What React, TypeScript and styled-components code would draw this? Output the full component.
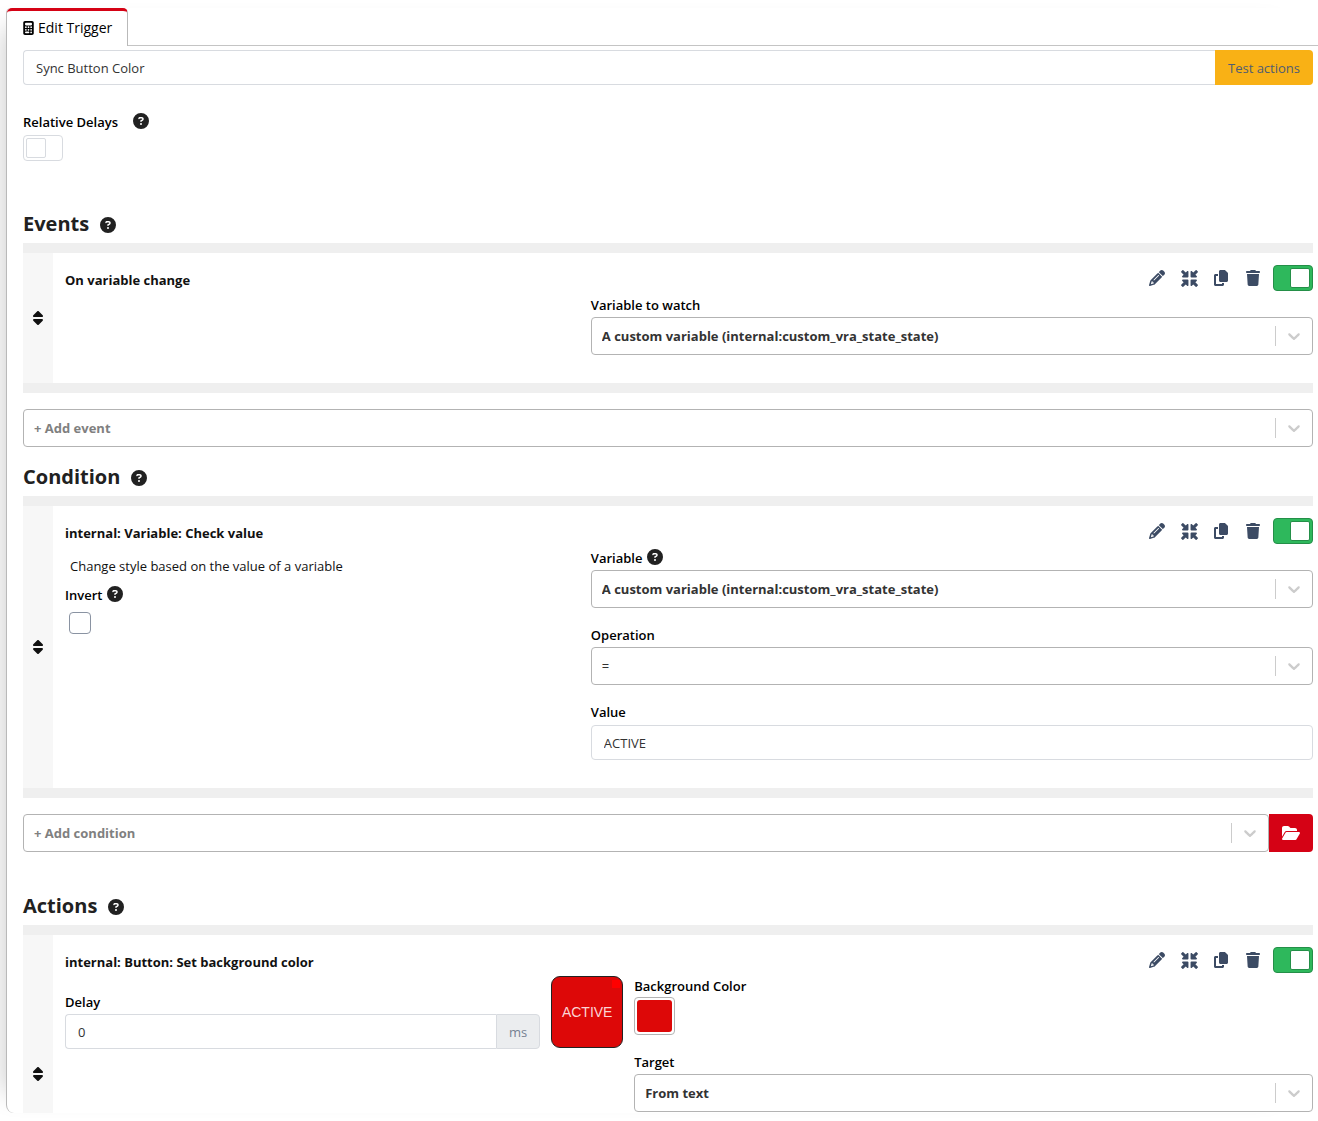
import React, { useId, useState } from 'react';
import styled, { createGlobalStyle, css } from 'styled-components';
import {
  FaCalculator,
  FaCircleQuestion,
  FaCopy,
  FaFolderOpen,
  FaMinimize,
  FaPencil,
  FaSort,
  FaTrash,
} from 'react-icons/fa6';

const GlobalStyle = createGlobalStyle`
  *, *::before, *::after { box-sizing: border-box; }
  body {
    margin: 0;
    background: #fff;
    color: #212121;
    font-family: "Open Sans", "Noto Sans", sans-serif;
    font-size: 13px;
    line-height: 20px;
  }
  button, input, select { font: inherit; }
  h2, h3, p { margin: 0; }
`;

const Page = styled.div`
  height: 100vh;
  padding: 8px 0 8px 6px;
  overflow: hidden;
`;

const Panel = styled.main`
  display: flex;
  flex-direction: column;
  height: 100%;
  border-left: 1px solid #b9b9b9;
  border-radius: 5px 0 0 8px;
  background: #fff;
  box-shadow: -22px 0 24px -20px rgba(0, 0, 0, 0.2);
`;

const TabBar = styled.nav`
  display: flex;
  flex: none;
  height: 38px;
`;

const Tab = styled.button`
  display: flex;
  align-items: center;
  gap: 4px;
  width: 121px;
  padding: 0 0 2px 16px;
  border: 0;
  border-top: 3px solid #d50215;
  border-right: 1px solid #b9b9b9;
  border-radius: 5px 5px 0 0;
  background: #fff;
  color: #000;
  font-size: 14px;
  font-weight: 500;
  white-space: nowrap;

  svg {
    flex: none;
    width: 11px;
    height: 14px;
  }
`;

const TabRest = styled.div`
  flex: 1;
  border-bottom: 1px solid #c4c4c4;
`;

const Content = styled.div`
  flex: 1;
  min-height: 0;
  padding: 4px 5px 0 16px;
  overflow: hidden;
`;

const InputGroup = styled.div`
  display: flex;
`;

const TextInput = styled.input<{ $joined?: boolean }>`
  flex: 1;
  width: 100%;
  min-width: 0;
  height: 35px;
  padding: 0 12px;
  border: 1px solid #d8dbe0;
  border-right-width: ${(p) => (p.$joined ? 0 : 1)}px;
  border-radius: ${(p) => (p.$joined ? '4px 0 0 4px' : '4px')};
  background: #fff;
  color: #333;
  outline: 0;
`;

const Unit = styled.span`
  display: flex;
  align-items: center;
  padding: 0 12px;
  border: 1px solid #d8dbe0;
  border-radius: 0 4px 4px 0;
  background: #ebedef;
  color: #768192;
`;

const TestButton = styled.button`
  width: 98px;
  border: 0;
  border-radius: 0 4px 4px 0;
  background: #f9b115;
  color: #4f5d73;
`;

const BrowseButton = styled.button`
  display: grid;
  place-items: center;
  width: 44px;
  border: 0;
  border-radius: 0 4px 4px 0;
  background: #d50215;
  color: #fff;
`;

const Label = styled.label`
  color: #000;
  font-weight: 600;
`;

const LabelLine = styled.div<{ $gap?: number }>`
  display: flex;
  align-items: center;
  gap: ${(p) => p.$gap ?? 5}px;
  height: 20px;

  svg { margin-bottom: 2px; }
`;

const DelaySetting = styled.div`
  display: grid;
  gap: 3px;
  margin: 27px 0 50px;
`;

const Switch = styled.input`
  appearance: none;
  display: block;
  width: 40px;
  height: 26px;
  margin: 0;
  padding: 2px;
  border: 1px solid #d8dbe0;
  border-radius: 4px;
  background: #fff;

  &::before {
    content: '';
    display: block;
    width: 20px;
    height: 20px;
    border: 1px solid #d8dbe0;
    border-radius: 2px;
    background: #fff;
  }

  &:checked {
    border-color: #248f48;
    background: #2eb85c;
  }

  &:checked::before {
    margin-left: auto;
    border-color: #248f48;
  }
`;

const Heading = styled.div<{ $top?: number }>`
  display: flex;
  align-items: center;
  gap: 11px;
  height: 26px;
  margin: ${(p) => p.$top ?? 0}px 0 6px;

  svg { margin-top: 2px; }
`;

const HeadingText = styled.h2`
  color: #212121;
  font-size: 20px;
  font-weight: 700;
  line-height: 26px;
`;

const Entry = styled.section<{ $minHeight?: number }>`
  display: flex;
  min-height: ${(p) => p.$minHeight ?? 0}px;
  border: solid #efefef;
  border-width: 10px 0;
`;

const Handle = styled.div`
  display: grid;
  flex: none;
  place-items: center;
  width: 30px;
  background: #f7f7f7;
  color: #111;
`;

const EntryMain = styled.div`
  flex: 1;
  min-width: 0;
  padding: 12px 0 28px 12px;
`;

const EntryHead = styled.div<{ $height?: number }>`
  display: flex;
  align-items: flex-start;
  justify-content: space-between;
  height: ${(p) => p.$height ?? 30}px;
`;

const EntryTitle = styled.h3`
  align-self: center;
  color: #111;
  font-size: 13px;
  font-weight: 700;
`;

const Tools = styled.div`
  display: flex;
  align-items: center;
  gap: 6px;
`;

const IconButtons = styled.div`
  display: flex;
  gap: 4px;
`;

const IconButton = styled.button`
  display: grid;
  place-items: center;
  width: 28px;
  height: 26px;
  padding: 0;
  border: 0;
  background: none;
  color: #3c4b64;
`;

const Columns = styled.div<{ $preview?: boolean }>`
  display: grid;
  ${(p) =>
    p.$preview
      ? css`
          grid-template-columns: 7fr 72px 10fr;
          gap: 11px;
        `
      : css`
          grid-template-columns: 5fr 7fr;
          gap: 10px;
        `}
`;

const Stack = styled.div<{ $top?: number }>`
  display: flex;
  flex-direction: column;
  gap: 17px;
  min-width: 0;
  padding-top: ${(p) => p.$top ?? 0}px;
`;

const Field = styled.div<{ $gap?: number }>`
  display: grid;
  gap: ${(p) => p.$gap ?? 2}px;
`;

const Summary = styled.div`
  display: grid;
  align-content: start;
  gap: 9px;
  padding-top: 8px;
`;

const Description = styled.p`
  padding-left: 5px;
  color: #111;
`;

const Tick = styled.input`
  appearance: none;
  width: 22px;
  height: 22px;
  margin: 0 0 0 4px;
  border: 1px solid #8a93a2;
  border-radius: 4px;
  background: #fff;
`;

const SelectBox = styled.div`
  display: grid;
  flex: 1;
  height: 38px;
  border: 1px solid #b3b3b3;
  border-radius: 4px;
  background: #fff;

  > * { grid-area: 1 / 1; }
`;

const NativeSelect = styled.select<{ $muted?: boolean; $plain?: boolean }>`
  appearance: none;
  width: 100%;
  padding: 0 48px 0 10px;
  border: 0;
  border-radius: 4px;
  background: transparent;
  color: ${(p) => (p.$muted ? '#808080' : '#333')};
  font-weight: ${(p) => (p.$plain ? 400 : 700)};
  outline: 0;
`;

const Indicator = styled.span`
  display: grid;
  place-items: center;
  align-self: center;
  justify-self: end;
  width: 37px;
  height: 20px;
  border-left: 1px solid #ccc;
  color: #ccc;
  pointer-events: none;
`;

const Preview = styled.div`
  display: grid;
  place-items: center;
  position: relative;
  width: 72px;
  height: 72px;
  border: 1px solid #222;
  border-radius: 9px;
  background: #dd0808;
  color: #fbd5d5;
  font-family: "Liberation Sans", Arial, sans-serif;
  font-size: 14px;

  &::after {
    content: '';
    position: absolute;
    top: 3px;
    right: 2px;
    width: 8px;
    height: 8px;
    background: #f00;
  }
`;

const ColorWell = styled.input`
  appearance: none;
  width: 41px;
  height: 38px;
  padding: 2px;
  border: 1px solid #b3b3b3;
  border-radius: 4px;
  background: #fff;

  &::-webkit-color-swatch-wrapper { padding: 0; }
  &::-webkit-color-swatch { border: 0; border-radius: 3px; }
`;

function Help() {
  return <FaCircleQuestion size={16} role="img" aria-label="Help" />;
}

type SelectProps = {
  id?: string;
  label?: string;
  value: string;
  muted?: boolean;
  plain?: boolean;
};

function Select({ id, label, value, muted, plain }: SelectProps) {
  return (
    <SelectBox>
      <NativeSelect id={id} aria-label={label} $muted={muted} $plain={plain}>
        <option>{value}</option>
      </NativeSelect>
      <Indicator>
        <svg width="20" height="20" viewBox="0 0 20 20" fill="currentColor" aria-hidden="true">
          <path d="M4.516 7.548c0.436-0.446 1.043-0.481 1.576 0l3.908 3.747 3.908-3.747c0.533-0.481 1.141-0.446 1.574 0 0.436 0.445 0.408 1.197 0 1.615-0.406 0.418-4.695 4.502-4.695 4.502-0.217 0.223-0.502 0.335-0.787 0.335s-0.57-0.112-0.789-0.335c0 0-4.287-4.084-4.695-4.502s-0.436-1.17 0-1.615z" />
        </svg>
      </Indicator>
    </SelectBox>
  );
}

type SelectFieldProps = { label: string; value: string; help?: boolean; plain?: boolean };

function SelectField({ label, value, help, plain }: SelectFieldProps) {
  const id = useId();
  return (
    <Field>
      <LabelLine>
        <Label htmlFor={id}>{label}</Label>
        {help && <Help />}
      </LabelLine>
      <Select id={id} value={value} plain={plain} />
    </Field>
  );
}

type EntryRowProps = {
  title: string;
  headHeight?: number;
  minHeight?: number;
  children: React.ReactNode;
};

function EntryRow({ title, headHeight, minHeight, children }: EntryRowProps) {
  const [enabled, setEnabled] = useState(true);
  return (
    <Entry $minHeight={minHeight}>
      <Handle>
        <FaSort size={16} />
      </Handle>
      <EntryMain>
        <EntryHead $height={headHeight}>
          <EntryTitle>{title}</EntryTitle>
          <Tools>
            <IconButtons>
              <IconButton aria-label="Rename"><FaPencil size={16} /></IconButton>
              <IconButton aria-label="Collapse"><FaMinimize size={17} /></IconButton>
              <IconButton aria-label="Duplicate"><FaCopy size={16} /></IconButton>
              <IconButton aria-label="Delete"><FaTrash size={16} /></IconButton>
            </IconButtons>
            <Switch
              type="checkbox"
              aria-label="Enabled"
              checked={enabled}
              onChange={(e) => setEnabled(e.target.checked)}
            />
          </Tools>
        </EntryHead>
        {children}
      </EntryMain>
    </Entry>
  );
}

function SectionHeading({ text, top }: { text: string; top?: number }) {
  return (
    <Heading $top={top}>
      <HeadingText>{text}</HeadingText>
      <Help />
    </Heading>
  );
}

const AddRow = styled.div`
  display: flex;
  margin-top: 16px;
`;

export default function App() {
  const variable = 'A custom variable (internal:custom_vra_state_state)';
  return (
    <>
      <GlobalStyle />
      <Page>
        <Panel>
          <TabBar>
            <Tab>
              <FaCalculator />
              Edit Trigger
            </Tab>
            <TabRest />
          </TabBar>
          <Content>
            <InputGroup>
              <TextInput $joined aria-label="Trigger name" defaultValue="Sync Button Color" />
              <TestButton>Test actions</TestButton>
            </InputGroup>

            <DelaySetting>
              <LabelLine $gap={15}>
                <Label htmlFor="relative-delays">Relative Delays</Label>
                <Help />
              </LabelLine>
              <Switch type="checkbox" id="relative-delays" />
            </DelaySetting>

            <SectionHeading text="Events" />
            <EntryRow title="On variable change">
              <Columns>
                <div />
                <SelectField label="Variable to watch" value={variable} />
              </Columns>
            </EntryRow>
            <AddRow>
              <Select label="Add event" value="+ Add event" muted />
            </AddRow>

            <SectionHeading text="Condition" top={17} />
            <EntryRow title="internal: Variable: Check value">
              <Columns>
                <Summary>
                  <Description>Change style based on the value of a variable</Description>
                  <Field $gap={7}>
                    <LabelLine>
                      <Label htmlFor="invert">Invert</Label>
                      <Help />
                    </LabelLine>
                    <Tick type="checkbox" id="invert" />
                  </Field>
                </Summary>
                <Stack>
                  <SelectField label="Variable" value={variable} help />
                  <SelectField label="Operation" value="=" plain />
                  <Field $gap={3}>
                    <Label htmlFor="value">Value</Label>
                    <TextInput id="value" defaultValue="ACTIVE" />
                  </Field>
                </Stack>
              </Columns>
            </EntryRow>
            <AddRow>
              <Select label="Add condition" value="+ Add condition" muted />
              <BrowseButton aria-label="Browse conditions"><FaFolderOpen size={18} /></BrowseButton>
            </AddRow>

            <SectionHeading text="Actions" top={41} />
            <EntryRow title="internal: Button: Set background color" headHeight={29} minHeight={298}>
              <Columns $preview>
                <Stack $top={16}>
                  <Field>
                    <Label htmlFor="delay">Delay</Label>
                    <InputGroup>
                      <TextInput $joined id="delay" inputMode="numeric" defaultValue="0" />
                      <Unit>ms</Unit>
                    </InputGroup>
                  </Field>
                </Stack>
                <Preview>ACTIVE</Preview>
                <Stack>
                  <Field $gap={1}>
                    <Label htmlFor="background">Background Color</Label>
                    <ColorWell type="color" id="background" defaultValue="#dd0808" />
                  </Field>
                  <SelectField label="Target" value="From text" />
                </Stack>
              </Columns>
            </EntryRow>
          </Content>
        </Panel>
      </Page>
    </>
  );
}
